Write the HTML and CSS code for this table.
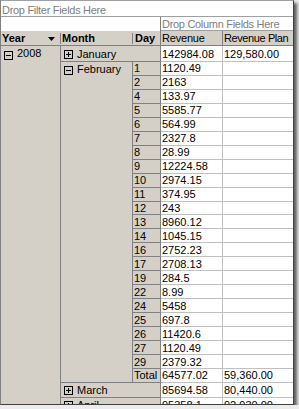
FILE: index.html
```html
<!DOCTYPE html>
<html>
<head>
<meta charset="utf-8">
<link rel="stylesheet" href="styles.css">
</head>
<body>
<div class="pivot">
  <div class="filter drop">Drop Filter Fields Here</div>
  <div class="blank"></div>
  <div class="coldrop drop">Drop Column Fields Here</div>

  <div class="hdr hyear"><b>Year</b><svg class="arrow" width="7" height="4" viewBox="0 0 7 4"><polygon points="0,0 7,0 3.5,4" fill="#000"/></svg></div>
  <div class="hdr hmonth"><b>Month</b></div>
  <div class="hdr hday"><b>Day</b></div>
  <div class="hdr hrev">Revenue</div>
  <div class="hdr hplan">Revenue Plan</div>

  <div class="yearcell"><svg class="tg" width="9" height="9" viewBox="0 0 9 9"><rect x=".5" y=".5" width="8" height="8" fill="none" stroke="#000"/><path d="M2 4.5h5" stroke="#000"/></svg>2008</div>
  <div class="febcell"><svg class="tg" width="9" height="9" viewBox="0 0 9 9"><rect x=".5" y=".5" width="8" height="8" fill="none" stroke="#000"/><path d="M2 4.5h5" stroke="#000"/></svg>February</div>

  <div class="mem"><svg class="tg" width="9" height="9" viewBox="0 0 9 9"><rect x=".5" y=".5" width="8" height="8" fill="none" stroke="#000"/><path d="M2 4.5h5M4.5 2v5" stroke="#000"/></svg>January</div>
  <div class="v">142984.08</div><div class="p">129,580.00</div>

  <div class="d">1</div><div class="v">1120.49</div><div class="p"></div>
  <div class="d">2</div><div class="v">2163</div><div class="p"></div>
  <div class="d">4</div><div class="v">133.97</div><div class="p"></div>
  <div class="d">5</div><div class="v">5585.77</div><div class="p"></div>
  <div class="d">6</div><div class="v">564.99</div><div class="p"></div>
  <div class="d">7</div><div class="v">2327.8</div><div class="p"></div>
  <div class="d">8</div><div class="v">28.99</div><div class="p"></div>
  <div class="d">9</div><div class="v">12224.58</div><div class="p"></div>
  <div class="d">10</div><div class="v">2974.15</div><div class="p"></div>
  <div class="d">11</div><div class="v">374.95</div><div class="p"></div>
  <div class="d">12</div><div class="v">243</div><div class="p"></div>
  <div class="d">13</div><div class="v">8960.12</div><div class="p"></div>
  <div class="d">14</div><div class="v">1045.15</div><div class="p"></div>
  <div class="d">16</div><div class="v">2752.23</div><div class="p"></div>
  <div class="d">17</div><div class="v">2708.13</div><div class="p"></div>
  <div class="d">19</div><div class="v">284.5</div><div class="p"></div>
  <div class="d">22</div><div class="v">8.99</div><div class="p"></div>
  <div class="d">24</div><div class="v">5458</div><div class="p"></div>
  <div class="d">25</div><div class="v">697.8</div><div class="p"></div>
  <div class="d">26</div><div class="v">11420.6</div><div class="p"></div>
  <div class="d">27</div><div class="v">1120.49</div><div class="p"></div>
  <div class="d">29</div><div class="v">2379.32</div><div class="p"></div>
  <div class="d">Total</div><div class="v">64577.02</div><div class="p">59,360.00</div>

  <div class="mem"><svg class="tg" width="9" height="9" viewBox="0 0 9 9"><rect x=".5" y=".5" width="8" height="8" fill="none" stroke="#000"/><path d="M2 4.5h5M4.5 2v5" stroke="#000"/></svg>March</div>
  <div class="v">85694.58</div><div class="p">80,440.00</div>

  <div class="mem"><svg class="tg" width="9" height="9" viewBox="0 0 9 9"><rect x=".5" y=".5" width="8" height="8" fill="none" stroke="#000"/><path d="M2 4.5h5M4.5 2v5" stroke="#000"/></svg>April</div>
  <div class="v">95358.1</div><div class="p">92,930.00</div>
</div>
</body>
</html>
```
FILE: styles.css
```css
html, body {
  margin: 0;
  padding: 0;
  background: #ececec;
}

body {
  font-family: "Liberation Sans", Arial, sans-serif;
  font-size: 11px;
  color: #000;
}

.pivot {
  display: grid;
  grid-template-columns: 60px 72px 28px 62px 70px;
  grid-template-rows: 16px 14px 15px 16px repeat(23, 13.957px) 15px 15px;
  width: 292px;
  height: 403px;
  overflow: hidden;
  background: #fff;
  border-top: 1px solid #a0a0a0;
  border-left: 1px solid #808080;
  border-right: 1px solid #404040;
  border-bottom: 1px solid #404040;
  box-shadow: 3px 3px 3px rgba(0, 0, 0, 0.6);
}

.pivot > div {
  display: flex;
  align-items: center;
  line-height: 13px;
  white-space: nowrap;
  overflow: hidden;
  box-sizing: border-box;
  min-width: 0;
  min-height: 0;
}

.drop {
  color: #808080;
  letter-spacing: -0.3px;
}

.filter {
  grid-column: 1 / -1;
  padding: 3px 0 0 1px;
  border-bottom: 1px solid #a0a0a0;
}

.blank {
  grid-column: span 3;
  border-right: 1px solid #808080;
}

.coldrop {
  grid-column: span 2;
  padding: 1px 0 0 1px;
  border-bottom: 1px solid #a0a0a0;
}

.hdr {
  background: #d4d0c8;
  border-bottom: 1px solid #808080;
  padding: 1px 0 0 1px;
}

.hyear {
  padding-left: 1px;
  background: linear-gradient(#808080, #808080) right center / 1px 11px no-repeat, #d4d0c8;
}

.hyear .arrow {
  margin-left: auto;
  margin-right: 6px;
}

.hmonth {
  background: linear-gradient(#808080, #808080) right center / 1px 11px no-repeat, #d4d0c8;
}

.hday {
  padding-left: 2px;
  border-right: 1px solid #808080;
}

.hrev {
  border-right: 1px solid #808080;
  letter-spacing: -0.2px;
}

.hplan {
  letter-spacing: -0.4px;
}

.yearcell {
  grid-column: 1;
  grid-row: 4 / span 26;
  align-items: flex-start !important;
  padding: 1px 0 0 3px;
  background: #d4d0c8;
  border-right: 1px solid #808080;
}

.yearcell .tg {
  margin-top: 4px;
}

.febcell {
  grid-column: 2;
  grid-row: 5 / span 23;
  align-items: flex-start !important;
  padding: 1px 0 0 3px;
  background: #d4d0c8;
  border-right: 1px solid #808080;
  border-bottom: 1px solid #808080;
}

.febcell .tg {
  margin-top: 3px;
}

.tg {
  flex: none;
  margin-right: 4px;
}

.mem {
  grid-column: span 2;
  padding: 1px 0 0 3px;
  background: #d4d0c8;
  border-right: 1px solid #808080;
  border-bottom: 1px solid #808080;
}

.d {
  padding: 1px 0 0 1px;
  background: #d4d0c8;
  border-right: 1px solid #808080;
  border-bottom: 1px solid #808080;
}

.v {
  padding: 1px 0 0 1px;
  border-right: 1px solid #c0c0c0;
  border-bottom: 1px solid #c0c0c0;
}

.p {
  padding: 1px 0 0 1px;
  border-bottom: 1px solid #c0c0c0;
}
```
